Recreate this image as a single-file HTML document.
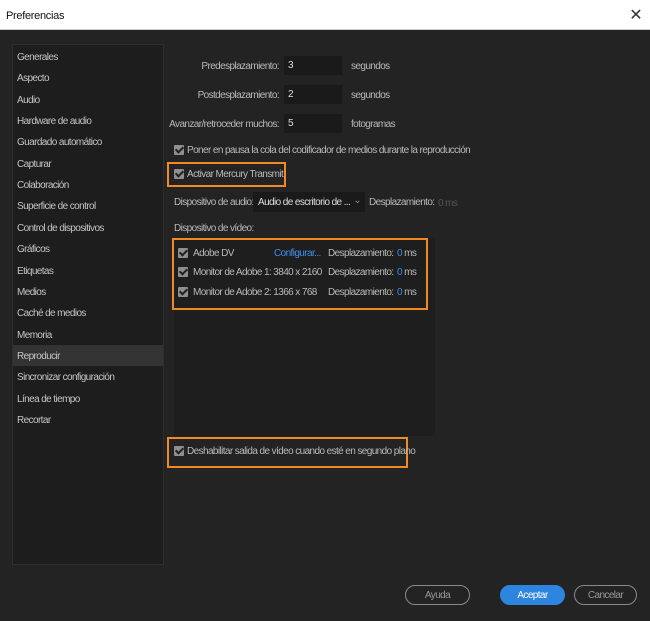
<!DOCTYPE html>
<html><head><meta charset="utf-8"><style>
*{margin:0;padding:0;box-sizing:border-box}
body{width:650px;height:621px;background:#232323;font-family:"Liberation Sans",sans-serif;font-size:10px;color:#b9b9b9;position:relative;overflow:hidden;letter-spacing:-0.6px}
.a{position:absolute;white-space:nowrap}
.title{position:absolute;left:0;top:0;width:650px;height:30px;background:#fff;border-bottom:1px solid #ccc;color:#111;font-size:11px;padding:10px 0 0 6px;letter-spacing:-0.3px}
.side{position:absolute;left:12px;top:44px;width:152px;height:521px;background:#1d1d1d;border:1px solid #2e2e2e}
.side .it{position:absolute;left:4px;font-size:10px;color:#c4c4c4}
.side .sel{position:absolute;left:0;width:150px;height:21px;background:#333}
.inp{position:absolute;width:58px;height:19px;background:#1a1a1a;color:#ddd;padding:4px 4px;font-size:10px}
.cb{position:absolute;width:10px;height:10px;background:#8f8f8f;border-radius:1px}
.cb:after{content:"";position:absolute;left:3px;top:0px;width:3px;height:6px;border:solid #222;border-width:0 2px 2px 0;transform:rotate(45deg)}
.or{position:absolute;border:2px solid #f08a24}
.btn{position:absolute;height:20px;border:1px solid #8a8a8a;border-radius:10px;text-align:center;padding-top:4px;color:#999}
.blue{color:#3f8fe8}
</style></head><body>
<div class="title">Preferencias</div>
<div class="a" style="right:8px;top:5px;font-size:16px;color:#333">✕</div>
<div class="side">
<div class="sel" style="top:300px"></div>
<div class="it" style="top:7px">Generales</div>
<div class="it" style="top:28px">Aspecto</div>
<div class="it" style="top:50px">Audio</div>
<div class="it" style="top:71px">Hardware de audio</div>
<div class="it" style="top:92px">Guardado automático</div>
<div class="it" style="top:114px">Capturar</div>
<div class="it" style="top:135px">Colaboración</div>
<div class="it" style="top:156px">Superficie de control</div>
<div class="it" style="top:178px">Control de dispositivos</div>
<div class="it" style="top:199px">Gráficos</div>
<div class="it" style="top:221px">Etiquetas</div>
<div class="it" style="top:242px">Medios</div>
<div class="it" style="top:263px">Caché de medios</div>
<div class="it" style="top:285px">Memoria</div>
<div class="it" style="top:306px">Reproducir</div>
<div class="it" style="top:327px">Sincronizar configuración</div>
<div class="it" style="top:349px">Línea de tiempo</div>
<div class="it" style="top:370px">Recortar</div>
</div>

<div class="a" style="right:371px;top:61px">Predesplazamiento:</div>
<div class="inp" style="left:284px;top:56px">3</div>
<div class="a" style="left:351px;top:61px">segundos</div>
<div class="a" style="right:371px;top:90px">Postdesplazamiento:</div>
<div class="inp" style="left:284px;top:85px">2</div>
<div class="a" style="left:351px;top:90px">segundos</div>
<div class="a" style="right:371px;top:119px">Avanzar/retroceder muchos:</div>
<div class="inp" style="left:284px;top:114px">5</div>
<div class="a" style="left:351px;top:119px">fotogramas</div>

<div class="cb" style="left:174px;top:145px"></div>
<div class="a" style="left:187px;top:145px">Poner en pausa la cola del codificador de medios durante la reproducción</div>
<div class="or" style="left:167px;top:162px;width:119px;height:25px"></div>
<div class="cb" style="left:174px;top:169px"></div>
<div class="a" style="left:187px;top:169px">Activar Mercury Transmit</div>

<div class="a" style="left:174px;top:197px">Dispositivo de audio:</div>
<div class="a" style="left:253px;top:192px;width:112px;height:20px;background:#1a1a1a;padding:5px 5px;color:#ddd">Audio de escritorio de ...<span style="position:absolute;right:4px;top:3px;color:#888">⌄</span></div>
<div class="a" style="left:369px;top:197px">Desplazamiento:</div>
<div class="a" style="left:438px;top:198px;color:#555">0 ms</div>
<div class="a" style="left:174px;top:223px">Dispositivo de vídeo:</div>

<div class="a" style="left:174px;top:238px;width:261px;height:198px;background:#1e1e1e"></div>
<div class="or" style="left:172px;top:238px;width:256px;height:72px"></div>
<div class="cb" style="left:178px;top:248px"></div><div class="a" style="left:193px;top:248px">Adobe DV</div>
<div class="a blue" style="left:274px;top:248px">Configurar...</div>
<div class="a" style="left:328px;top:248px">Desplazamiento:</div><div class="a" style="left:397px;top:248px"><span class="blue">0</span> ms</div>
<div class="cb" style="left:178px;top:267px"></div><div class="a" style="left:193px;top:267px">Monitor de Adobe 1: 3840 x 2160</div>
<div class="a" style="left:328px;top:267px">Desplazamiento:</div><div class="a" style="left:397px;top:267px"><span class="blue">0</span> ms</div>
<div class="cb" style="left:178px;top:287px"></div><div class="a" style="left:193px;top:287px">Monitor de Adobe 2: 1366 x 768</div>
<div class="a" style="left:328px;top:287px">Desplazamiento:</div><div class="a" style="left:397px;top:287px"><span class="blue">0</span> ms</div>

<div class="or" style="left:167px;top:437px;width:241px;height:31px"></div>
<div class="cb" style="left:174px;top:446px"></div>
<div class="a" style="left:187px;top:446px">Deshabilitar salida de vídeo cuando esté en segundo plano</div>

<div class="btn" style="left:405px;top:585px;width:65px">Ayuda</div>
<div class="btn" style="left:500px;top:585px;width:65px;background:#2d85e0;border-color:#2d85e0;color:#fff">Aceptar</div>
<div class="btn" style="left:574px;top:585px;width:63px">Cancelar</div>
</body></html>
